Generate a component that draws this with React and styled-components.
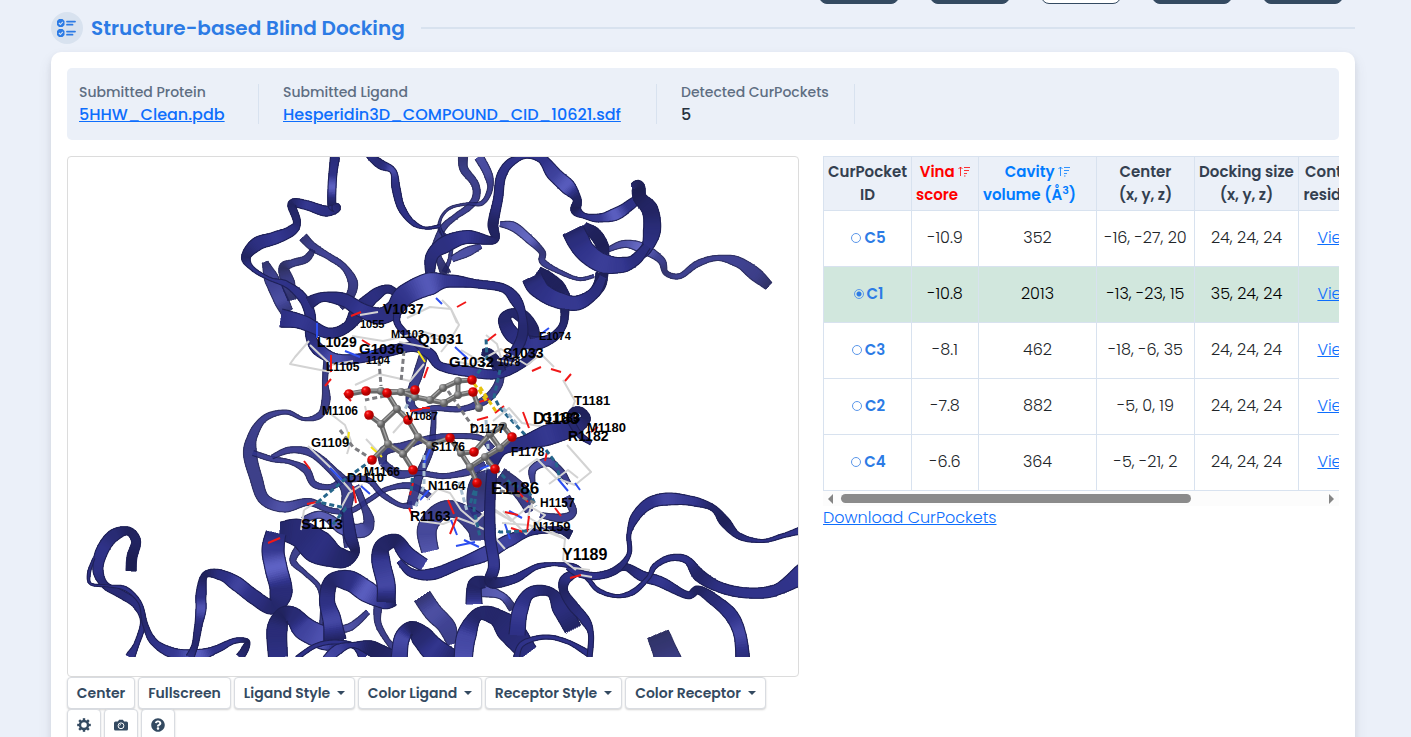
import React, { useState } from "react";
import styled, { createGlobalStyle, css } from "styled-components";
import { FaQuestionCircle } from "react-icons/fa";

const Global = createGlobalStyle`
  *, *::before, *::after { box-sizing: border-box; }
  body { margin: 0; background: #ebf0f9; color: #212529; font: 300 16px/24px Poppins, Inter, sans-serif; }
  button, input { font: inherit; }
`;

const Page = styled.main`
  height: 100vh;
  overflow: hidden;
  padding: 0 56px 0 51px;
`;

const TopNav = styled.nav`
  display: flex;
  justify-content: flex-end;
  align-items: flex-end;
  gap: 31px;
  height: 4px;
  padding-right: 12px;
`;

const NavButton = styled.button`
  flex: none;
  width: 80px;
  height: 32px;
  border: 1px solid #344a61;
  border-radius: 8px;
  background: ${(p) => (p.$active ? "#fff" : "#344a61")};
`;

const Heading = styled.header`
  display: flex;
  align-items: center;
  height: 48px;
  &::after {
    content: "";
    flex: 1;
    height: 2px;
    margin-left: 16px;
    background: #d8e2ef;
  }
`;

const HeadingIcon = styled.span`
  display: grid;
  place-items: center;
  width: 32px;
  height: 32px;
  margin-right: 8px;
  border-radius: 50%;
  background: #d8e2ef;
`;

const Title = styled.h1`
  margin: 0;
  color: #2c7be5;
  font-size: 20px;
  font-weight: 600;
  line-height: 32px;
`;

const Card = styled.section`
  min-height: 100vh;
  padding: 16px;
  border-radius: 10px;
  background: #fff;
  box-shadow: 0 7px 14px rgba(65, 69, 88, 0.1), 0 3px 6px rgba(0, 0, 0, 0.07);
`;

const Summary = styled.div`
  display: flex;
  padding: 16px 12px;
  border-radius: 5px;
  background: #ebf0f8;
`;

const SummaryItem = styled.div`
  flex: 0 0 ${(p) => p.$basis}px;
  height: 40px;
  border-right: 1px solid #d8e2ef;
  & + & { padding-left: 24px; }
`;

const SummaryLabel = styled.div`
  color: #5e6e82;
  font-size: 14px;
  font-weight: 500;
  line-height: 17px;
`;

const SummaryValue = styled.div`
  color: #263240;
  font-weight: 500;
  line-height: 27px;
`;

const Link = styled.a`
  color: #0d6efd;
  text-decoration: underline;
`;

const Columns = styled.div`
  display: grid;
  grid-template-columns: minmax(0, 732fr) minmax(0, 516fr);
  gap: 24px;
  margin-top: 16px;
`;

const Viewer = styled.div`
  height: 521px;
  border: 1px solid #dcdcdc;
  border-radius: 4px;
  overflow: hidden;
`;

const Scene = styled.svg`
  display: block;
  width: 100%;
  height: 500px;
`;

const Toolbar = styled.div`
  display: flex;
  flex-wrap: wrap;
  column-gap: 3px;
`;

const ToolButton = styled.button`
  display: inline-flex;
  align-items: center;
  justify-content: center;
  gap: 7px;
  width: ${(p) => p.$width}px;
  height: 32px;
  padding: 0;
  border: 1px solid #d9dce1;
  border-radius: 4px;
  background: #fff;
  box-shadow: 0 1px 2px rgba(0, 0, 0, 0.18);
  color: #344a61;
  font-size: 14px;
  font-weight: 600;
  white-space: nowrap;
  ${(p) => p.$menu && css`
    &::after {
      content: "";
      border: 4px solid transparent;
      border-top-color: currentColor;
      border-bottom: 0;
    }
  `}
`;

const TableClip = styled.div`overflow: hidden;`;

const Table = styled.table`
  width: 550px;
  table-layout: fixed;
  border-collapse: collapse;
  text-align: center;
`;

const Th = styled.th`
  height: 54px;
  padding: 3px 0 4px;
  border: 1px solid #d8e2ef;
  background: #ebf0f8;
  color: #344050;
  font-size: 15px;
  font-weight: 600;
  line-height: 23px;
  white-space: nowrap;
`;

const SortButton = styled.button`
  display: inline-block;
  padding: 0;
  border: 0;
  background: none;
  color: ${(p) => p.$color};
  font-weight: 600;
  vertical-align: top;
`;

const SortLine = styled.span`
  display: block;
  padding-right: ${(p) => (p.$last ? 16 : 0)}px;
  sup { font-size: 11px; line-height: 0; }
`;

const Row = styled.tr`
  background: ${(p) => (p.$selected ? "#d1e7dd" : "#fff")};
  color: ${(p) => (p.$selected ? "#000" : "#212529")};
`;

const Td = styled.td`
  height: 56px;
  padding: 0 0 2px;
  border: 1px solid #d8e2ef;
  white-space: nowrap;
`;

const PocketLabel = styled.label`
  display: inline-flex;
  align-items: center;
  gap: 3px;
  padding-left: 2px;
  color: #2c7be5;
  font-size: 15px;
  font-weight: 600;
`;

const PocketRadio = styled.input`
  appearance: none;
  width: 10px;
  height: 10px;
  margin: 0;
  border: 1px solid #5b97ea;
  border-radius: 50%;
  &:checked { background: radial-gradient(circle, #2c7be5 0 2px, transparent 3px); }
`;

const Scrollbar = styled.div`
  display: flex;
  align-items: center;
  gap: 8px;
  height: 15px;
  padding: 0 5px;
  background: #fcfcfc;
`;

const ScrollArrow = styled.span`
  border: 5px solid transparent;
  ${(p) => (p.$right ? "border-left-color: #858585; border-right: 0;" : "border-right-color: #858585; border-left: 0;")}
`;

const ScrollTrack = styled.div`flex: 1;`;
const ScrollThumb = styled.div`
  width: 73%;
  height: 9px;
  border-radius: 5px;
  background: #8b8b8b;
`;

/* ---------- ribbon drawing ---------- */

const spline = (a, b, c, d, t) =>
  0.5 * (2 * b + (c - a) * t + (2 * a - 5 * b + 4 * c - d) * t * t + (3 * b - a - 3 * c + d) * t * t * t);

const STEPS = 12;

function tint(s) {
  const dark = [27, 29, 78], mid = [48, 51, 138], light = [112, 116, 218];
  const k = Math.max(0, Math.min(1, s));
  const [from, to, u] = k < 0.5 ? [dark, mid, k * 2] : [mid, light, (k - 0.5) * 2];
  return `rgb(${from.map((v, i) => Math.round(v + (to[i] - v) * u)).join(",")})`;
}

/* A ribbon is a list of [x, y, width, shade] stations along its centre line. */
function Ribbon({ pts, faded }) {
  const samples = [];
  for (let i = 0; i < pts.length - 1; i++) {
    const q = [pts[Math.max(0, i - 1)], pts[i], pts[i + 1], pts[Math.min(pts.length - 1, i + 2)]];
    for (let j = 0; j < STEPS; j++) {
      const t = j / STEPS;
      const ease = t * t * (3 - 2 * t);
      const v = [0, 1].map((n) => spline(q[0][n], q[1][n], q[2][n], q[3][n], t));
      const sa = q[1][3] ?? 0.46, sb = q[2][3] ?? 0.46;
      samples.push([v[0], v[1], q[1][2] + (q[2][2] - q[1][2]) * ease, sa + (sb - sa) * ease]);
    }
  }
  const last = pts[pts.length - 1];
  samples.push([last[0], last[1], last[2], last[3] ?? 0.46]);
  const edges = samples.map((s, i) => {
    const a = samples[Math.max(0, i - 4)], b = samples[Math.min(samples.length - 1, i + 4)];
    const dx = b[0] - a[0], dy = b[1] - a[1], len = Math.hypot(dx, dy) || 1;
    const nx = (-dy / len) * (s[2] / 2), ny = (dx / len) * (s[2] / 2);
    return { l: [s[0] + nx, s[1] + ny], r: [s[0] - nx, s[1] - ny], turn: Math.abs(dx / len), s: s[3] };
  });
  const f = (p) => `${p[0].toFixed(1)} ${p[1].toFixed(1)}`;
  const line = (side) => "M" + edges.map((e) => f(e[side])).join("L");
  return (
    <g opacity={faded ? 0.92 : 1}>
      <g shapeRendering="crispEdges">
        {edges.slice(1).map((e, i) => {
          const p = edges[i];
          const c = tint(e.s + (e.turn - 0.6) * 0.1);
          return <path key={i} d={`M${f(p.l)}L${f(e.l)}L${f(e.r)}L${f(p.r)}Z`} fill={c} stroke={c} strokeWidth="0.6" />;
        })}
      </g>
      <path d={line("l")} fill="none" stroke="#1e2056" strokeWidth="1.1" strokeLinejoin="round" />
      <path d={line("r")} fill="none" stroke="#1e2056" strokeWidth="1.1" strokeLinejoin="round" />
    </g>
  );
}

const backRibbons = [
  [[265,262,6,.2],[272,280,14,.5],[281,300,14,.6],[287,312,12,.3]],
  [[303,237,9,.2],[313,247,8,.4],[328,256,6,.5],[344,267,6],[353,283,9],[349,298,8,.3],[340,307,7,.2]],
  [[313,250,5,.2],[306,259,7,.3],[293,263,7,.4],[284,268,10,.1],[288,283,13,.4],[292,300,8,.2]],
  [[463,157,9,.3],[464,169,8,.4],[475,184,7],[476,197,7],[469,207,6],[455,217,5],[443,228,6],[435,246,6]],
  [[479,157,9,.6],[488,174,8,.6],[490,189,5],[482,203,4],[466,204,2],[450,208,2],[441,218,2],[440,230,3],[450,242,4],[450,258,3],[444,272,4]],
  [[452,259,6,.6],[467,252,9,.6],[481,246,5,.5]],
  [[440,228,2],[445,243,3],[438,254,5],[446,274,10,.1]],
  [[500,224,5,.5],[514,227,9,.7],[529,239,8,.8],[542,252,6,.3],[543,262,6],[560,272,4],[579,279,3],[594,276,3]],
  [[605,251,4],[624,244,7,.6],[642,248,10,.8],[661,260,7],[666,273,5,.2],[680,276,5],[697,264,6],[717,258,5],[738,262,10],[755,274,13,.4],[769,286,9,.1]],
  [[327,360,6],[325,380,5],[326,400,8],[320,415,6],[304,419,3],[286,412,4],[265,418,6],[253,435,9],[250,454,13],[256,478,12],[264,499,11],[284,507,10,.6],[309,502,7],[329,510,5],[350,511,5],[369,500,4],[387,489,4],[411,486,6],[431,497,5]],
  [[253,453,5],[272,459,5],[290,462,4],[306,470,7],[314,484,6],[330,487,5],[346,480,6],[368,480,5],[382,494,5],[400,505,4],[412,505,7]],
  [[272,457,4],[290,450,6],[311,453,7],[331,469,8],[347,489,12],[346,515,10],[350,547,11]],
  [[303,520,6],[322,515,7,.7],[344,529,12,.7],[363,530,14,.6],[369,521,10],[363,503,6],[356,486,6]],
  [[299,548,8],[293,561,6],[305,573,4],[319,587,4],[322,606,3],[321,626,3]],
  [[330,630,8],[350,627,7,.6],[368,612,5]],
  [[378,606,8],[378,623,6],[387,640,5],[397,651,7]],
  [[425,350,8],[418,374,9],[410,399,8],[418,411,5],[435,408,5],[462,409,5],[485,400,8],[498,385,8],[502,365,6]],
  [[434,411,4],[433,431,5],[430,450,7],[418,479,8],[412,505,10]],
  [[383,464,7],[384,451,9,.3],[403,446,7],[430,438,5],[455,436,5],[480,438,5],[492,449,7]],
  [[383,463,7],[398,474,8],[420,473,5],[445,476,5],[474,470,7],[485,463,4]],
  [[492,473,10],[480,484,20,.2],[477,500,20,.4],[481,512,18]],
  [[500,475,15,.2],[521,492,15,.4],[529,512,7]],
  [[566,497,8],[573,512,7],[562,518,8],[540,515,5]],
  [[533,483,4],[533,469,7,.6],[548,462,8,.6],[560,471,7],[569,483,4]],
  [[430,551,17,.7],[427,529,19,.6],[439,512,17,.4],[456,510,16,.4],[477,525,22,.4],[480,540,19]],
  [[422,596,18,.2],[433,612,18,.6],[447,627,17,.5],[452,644,10]],
  [[480,589,15,.6],[502,596,7,.7],[513,609,8,.2]],
  [[658,634,22,.1],[662,644,23,.2],[669,662,26,.4]],
];

const frontRibbons = [
  [[335,157,9,.4],[333,173,8,.5],[332,188,8,.9],[332,205,8,.2],[336,208,9,.3],[325,211,10,.4],[306,205,9,.5],[292,204,8,.2],[297,222,7,.3],[291,231,10,.4],[275,238,12,.5],[257,244,13,.4],[246,257,9,.2],[253,269,4],[270,279,3],[286,284,6],[302,297,9],[310,314,10],[311,337,10,.4],[319,350,12,.5],[337,359,10,.7],[362,358,9],[389,351,10],[414,347,9],[430,354,10],[440,366,8],[465,371,10,.6],[498,374,9],[526,361,8,.3],[534,349,7]],
  [[366,153,5],[380,164,9,.3],[393,171,6,.7],[396,188,8],[401,207,7],[412,222,5],[425,228,2],[440,226,3]],
  [[430,278,8,.3],[432,256,12,.4],[446,244,16,.4],[467,237,13,.5],[494,240,7,.2],[493,224,10,.2],[498,199,9],[501,177,9],[510,163,8],[525,157,3],[541,158,9],[554,174,14,.6],[567,186,15,.8],[577,199,8,.2],[576,210,10,.1],[585,216,5],[599,218,8,.5],[616,214,12,.8],[630,205,10],[642,195,6]],
  [[632,187,7,.2],[638,187,13,.1],[640,198,13,.1],[650,210,16,.2],[652,230,17,.4],[646,249,11],[632,260,7,.3]],
  [[584,226,8,.2],[595,234,12,.1],[602,245,12,.1],[605,258,8,.2]],
  [[573,230,22,.2],[578,240,22,.4],[586,252,20,.5],[602,263,19,.55],[621,265,15,.5],[635,260,11,.4],[647,246,8,.4]],
  [[602,273,12,.1],[600,284,12,.2],[594,294,10,.3]],
  [[538,271,9,.1],[548,278,12,.1],[558,286,12,.1],[566,297,9,.2]],
  [[532,277,20,.2],[536,285,20,.4],[544,293,17,.45],[558,300,16,.5],[577,303,14,.5],[594,293,11,.4],[603,277,8,.4]],
  [[565,309,8,.2],[563,325,7,.3],[552,338,9,.4],[534,343,13,.5],[514,336,15,.4],[505,321,13,.3],[511,313,8,.2],[523,317,13,.2],[532,328,12,.2],[535,338,9,.3]],
  [[281,318,18,.4],[302,322,14,.5],[328,333,10,.4],[347,327,10,.3],[359,311,16,.3],[374,296,12,.4],[387,289,8,.3],[398,294,6,.2]],
  [[309,303,12,.2],[323,297,9,.4],[344,300,13,.4],[361,310,14,.5],[380,316,16,.4],[394,309,17,.4],[405,295,20,.5],[429,284,22,.75],[450,281,12,.5],[478,284,8,.4],[503,288,8,.4],[515,299,11,.4],[522,315,8,.4],[522,337,10,.3],[510,358,10,.5],[492,368,6,.3]],
  [[399,306,8],[397,322,6],[408,336,6],[421,347,7]],
  [[482,352,6,.1],[489,354,10,.1],[496,362,10,.1],[503,372,7,.3]],
  [[131,571,10,.1],[132,557,10,.1],[136,541,9,.2],[128,531,8,.1],[113,536,12,.3],[102,551,12,.5],[98,570,10,.5],[105,585,7,.3],[121,594,8,.3],[137,605,8,.4],[143,622,5],[137,643,5],[130,657,9]],
  [[94,558,2],[89,573,3],[91,584,2],[109,586,2],[126,589,4],[140,603,3],[145,624,5,.3],[154,642,7],[173,653,10,.5],[198,655,11,.8],[217,649,7],[234,641,5],[247,641,4,.1],[245,649,7,.2],[240,657,8,.3]],
  [[347,509,9],[350,535,12,.4],[355,553,8,.1],[340,558,20,.2],[318,547,33,.4],[299,533,27,.3],[280,531,18,.2]],
  [[276,533,20,.4],[273,550,22,.6],[276,568,22,.9],[281,592,22,.4],[272,607,14,.2],[254,597,14,.4],[237,584,14,.6],[221,575,10,.4],[205,575,6,.1],[201,595,10,.5],[201,609,10,.8],[198,628,7,.4],[195,645,6,.3],[190,657,8]],
  [[278,657,19,.5],[277,630,20,.4],[283,615,15,.1],[294,617,18,.3],[305,629,23,.6],[324,638,23,.7],[343,643,15,.2]],
  [[335,640,22,.2],[332,620,18,.7],[327,600,15,.5],[332,581,14,.2],[350,581,20,.4],[366,591,21,.8],[384,601,15,.5],[395,600,11,.1]],
  [[386,602,18,.2],[386,584,18,.7],[381,562,18,.6],[382,547,15,.2],[396,541,13,.1],[407,554,15,.5],[424,565,13,.6]],
  [[297,658,4],[315,646,4],[335,642,4],[354,646,5],[365,657,12]],
  [[327,660,10,.7],[337,650,10,.6],[352,645,5],[373,649,15,.1],[389,661,23,.2]],
  [[399,660,16,.6],[402,638,15,.7],[412,628,13,.1],[423,638,22,.3],[434,650,24,.5],[454,662,22,.2]],
  [[474,604,16,.7],[475,585,14,.2],[485,582,11,.1]],
  [[463,662,18,.8],[466,637,19,.7],[477,615,12,.2],[494,616,16,.2],[510,630,26,.3],[528,653,20,.4]],
  [[517,635,16,.5],[520,611,15,.6],[530,593,11,.4],[550,592,9,.2],[562,609,18,.4],[573,629,17,.2]],
  [[516,660,6],[522,644,5],[545,637,4],[568,642,4],[589,654,6]],
  [[399,561,5],[412,573,8],[433,574,11],[459,564,10],[485,554,14,.6],[508,541,12,.6],[532,532,6,.4],[558,530,6,.2],[571,535,9,.1]],
  [[615,571,4],[626,567,7,.2],[642,576,10,.4],[661,582,10,.5],[687,595,7,.3],[698,590,8,.1],[713,599,11,.3],[731,615,13,.5],[740,635,12,.7],[743,662,14,.4]],
  [[577,572,7],[565,580,10,.4],[564,592,8,.2],[573,606,10,.3],[585,620,9,.4],[591,635,5],[589,662,5]],
  [[554,564,3],[575,567,5],[588,579,4],[598,590,4],[616,596,3],[633,592,5],[648,578,4],[655,566,5],[670,558,6],[687,560,7],[700,576,12,.2],[722,588,10,.4],[749,593,10],[776,590,11],[804,573,20,.5]],
  [[567,568,3],[578,573,7],[596,576,7],[616,570,7,.3],[629,554,4],[629,534,4],[636,516,9],[650,503,11],[668,499,12,.6],[692,501,9,.5],[713,508,6,.2],[725,522,10,.1],[739,536,6,.3],[762,541,3],[782,536,4],[802,530,7]],
  [[492,470,10,.4],[490,500,10,.4],[490,536,11,.5],[494,565,11,.6],[491,582,11,.1],[514,579,8,.4],[536,567,5],[554,564,3]],
  [[491,466,11,.3],[502,450,10,.4],[523,443,13,.4],[548,435,20,.5],[571,428,18,.4],[585,420,10,.2],[582,411,6,.1],[573,411,6,.1],[571,420,7,.3],[579,434,6,.3],[591,443,4]],
];

const sticks = [
  "M407 318L430 307L451 309L459 325L449 342L429 337M451 309L442 300M451 309L457 323",
  "M360 315L378 312M352 336L383 341L424 332L449 339M399 342L430 348",
  "M309 341L295 357L290 364L305 367L331 372M310 345L331 365L353 361",
  "M355 385L379 374L410 381L424 364M327 411L345 425L351 441L347 454M365 406L368 420",
  "M308 446L330 467L345 484L352 492M366 439L381 455M393 433L408 416",
  "M304 510L301 530M304 510L316 502M340 510L349 493L362 485L353 490",
  "M427 500L438 489L450 493L461 510L474 521L490 511M420 521L443 524L458 518L474 524L489 508L506 518",
  "M455 361L472 365L501 349L527 365L541 354L554 367M563 380L575 401L570 414",
  "M493 421L509 408L522 423L545 427L568 422M519 472L537 459L556 478L575 485L591 472L567 445",
  "M490 506L511 521L529 506L545 515L526 534L503 511M532 503L528 517L552 532L565 539L563 560L576 570",
  "M549 484L568 470L578 478M574 568L590 570M580 575L592 577",
  "M475 525L490 532L505 549M502 523L529 525L563 538",
  "M486 335L497 344L501 358M449 342L441 352M461 350L478 360M497 360L517 364",
];
const blueTips = "M436 298L442 304M345 351L360 357M317 323L317 338M455 347L468 359M330 468L342 480M361 486L370 494M420 500L429 490M456 546L475 542M451 520L457 535M480 469L500 461M509 511L522 518M558 479L568 491M575 483L580 490M505 524L510 539M536 566L549 564M541 334L549 328M424 464L431 447M572 422L581 436M363 352L375 352M464 540L479 547";
const redTips = "M457 307L466 302M351 316L361 312M362 340L370 345M344 393L351 401M325 386L331 379M331 355L331 372M424 378L428 367M422 408L430 408M304 461L310 469M268 543L280 538M307 504L317 502M353 486L356 503M410 495L413 483M448 500L454 514M450 534L457 517M487 341L496 334M532 371L541 367M551 369L561 372M565 381L571 374M479 402L489 399M495 413L504 406M529 428L523 412M545 461L547 452M561 516L555 508M511 528L523 532M529 516L527 532M570 578L581 575M517 491L528 502M505 512L518 515M409 508L413 517M477 420L488 417M410 411L422 409M591 432L598 427";

const contacts = [
  ["#26668b", "M372 460L344 480L318 502L346 508M346 508L330 528M477 483L474 510L480 537M477 483L469 507M413 470L411 494M496 469L510 483L529 492L536 506M473 380L487 360L486 338M500 370L494 397L500 408L514 423L530 440M546 450L556 463L560 479M484 524L500 532L530 531"],
  ["#a8bed1", "M415 390L403 413M424 455L424 486L415 508M486 420L488 448L487 474M459 482L467 511M503 408L517 424"],
  ["#7c7c80", "M379 361L381 386M404 351L401 382M385 396L365 400M448 391L466 417L478 433M340 430L353 447L370 458M492 489L515 494L537 504"],
  ["#e5c30e", "M469 377L479 390L487 402M480 387L497 413"],
];

const carbon = { C1:[381,391], C2:[401,392], C3:[415,397], C4:[397,409], C5:[381,424], C6:[388,444], C7:[403,454], C8:[418,437], C9:[430,445], C10:[443,388], C11:[458,395], C12:[458,381], C13:[430,400], C14:[444,403], C15:[479,408], C16:[461,453], C17:[470,467], C18:[485,457], C19:[500,448], C20:[490,434], C21:[503,426] };
const oxygen = { O1:[349,394], O2:[366,391], O3:[387,393], O4:[415,390], O5:[369,415], O6:[408,420], O7:[372,460], O8:[413,470], O9:[450,438], O10:[474,452], O11:[512,437], O12:[477,483], O13:[472,380], O14:[473,392], O15:[495,469] };
const atoms = { ...carbon, ...oxygen };
const bonds = "O1-O2 O2-C1 C1-C2 C2-O3 C2-C3 C2-O4 C3-C13 C13-C14 C14-C11 C11-C12 C12-C10 C10-C13 C12-O13 C11-O14 O14-C15 O3-C4 C4-C5 C4-O6 C5-O5 C5-C6 C6-O7 C6-C7 C7-C8 C7-O8 O6-C8 C8-C9 C9-O9 O9-C16 C16-O10 C16-C17 C17-O12 C17-C18 C18-C19 C18-O15 C19-O11 C19-C20 C20-C21 O10-C20 C21-O11".split(" ").map((b) => b.split("-"));

const labels = [
  ["1055",360,328,11],["M1103",391,338,11],["1104",366,364,11],["L1105",326,371,12],["1078",498,366,10],["E1074",539,340,11],
  ["V1087",406,420,11],["D1177",470,433,12],["S1176",431,451,12],["F1178",511,456,12],["H1157",540,507,12],["M1106",322,415,12],
  ["V1037",383,314,14],["Q1031",418,344,15],["L1029",317,347,14],["G1036",359,354,15],["G1032",449,367,15],["S1033",503,358,14],
  ["T1181",574,405,13],["M1180",587,432,13],["G1183",542,422,13],["D1183",533,424,16],["R1182",568,441,14],["G1109",311,447,13],["M1166",364,476,12],
  ["D1110",347,482,13],["N1164",428,490,13],["R1163",410,521,14],["N1159",533,531,13],["S1113",301,529,15],["E1186",491,494,17],["Y1189",562,560,16],
];

function Molecule() {
  return (
    <Scene viewBox="68 157 730 500" role="img" aria-label="Docked ligand in protein pocket">
      <defs>
        <radialGradient id="oxygen" cx="35%" cy="30%"><stop offset="0" stopColor="#ff6a6a" /><stop offset=".35" stopColor="#f00c0c" /><stop offset="1" stopColor="#b00000" /></radialGradient>
        <radialGradient id="carbon" cx="35%" cy="30%"><stop offset="0" stopColor="#b5b5b5" /><stop offset="1" stopColor="#5e5e5e" /></radialGradient>
      </defs>
      {backRibbons.map((pts, i) => <Ribbon key={i} pts={pts} faded />)}
      {frontRibbons.slice(0, -2).map((pts, i) => <Ribbon key={i} pts={pts} />)}
      <g fill="none" strokeWidth="2">
        {sticks.map((d) => <path key={d} d={d} stroke="#d3d3d3" strokeLinejoin="round" />)}
        <path d={blueTips} stroke="#2e4ff0" />
        <path d={redTips} stroke="#f01818" />
        <path d="M418 351L425 362M349 432L347 444M371 447L382 457" stroke="#f5e416" />
      </g>
      {contacts.map(([c, d]) => <path key={c} d={d} fill="none" stroke={c} strokeWidth="3" strokeDasharray="5 3" />)}
      {frontRibbons.slice(-2).map((pts, i) => <Ribbon key={i} pts={pts} />)}
      <g stroke="#686868" strokeWidth="5" strokeLinecap="round">
        {bonds.map(([a, b]) => <line key={a + b} x1={atoms[a][0]} y1={atoms[a][1]} x2={atoms[b][0]} y2={atoms[b][1]} />)}
      </g>
      <g stroke="#a2a2a2" strokeWidth="1.4">
        {bonds.map(([a, b]) => <line key={a + b} x1={atoms[a][0]} y1={atoms[a][1] - 1} x2={atoms[b][0]} y2={atoms[b][1] - 1} />)}
      </g>
      {Object.entries(carbon).map(([k, [x, y]]) => <circle key={k} cx={x} cy={y} r="4" fill="url(#carbon)" />)}
      {Object.entries(oxygen).map(([k, [x, y]]) => <circle key={k} cx={x} cy={y} r="4.8" fill="url(#oxygen)" />)}
      <g fill="#000" fontFamily="Liberation Sans, sans-serif" fontWeight="700">
        {labels.map(([t, x, y, s]) => <text key={t} x={x} y={y} fontSize={s}>{t}</text>)}
      </g>
    </Scene>
  );
}

const SortIcon = () => (
  <svg width="12" height="11" viewBox="0 0 12 11" fill="none" stroke="currentColor" strokeWidth="0.8" aria-hidden="true">
    <path d="M2.5 10V1M.5 3l2-2 2 2M6 1.5h6M6 4.5h5M6 7.5h3M6 10h1.5" />
  </svg>
);

const GearIcon = () => (
  <svg width="14" height="14" viewBox="0 0 14 14" fill="none" stroke="currentColor" aria-hidden="true">
    <circle cx="7" cy="7" r="4" strokeWidth="2.4" />
    {[0, 45, 90, 135, 180, 225, 270, 315].map((a) => (
      <path key={a} d="M7 .2v2.4" strokeWidth="2.4" transform={`rotate(${a} 7 7)`} />
    ))}
  </svg>
);

const CameraIcon = () => (
  <svg width="14" height="12" viewBox="0 0 14 12" aria-hidden="true">
    <path d="M1.5 2.5h2.3L5.2.8h3.6l1.4 1.7h2.3Q14 2.5 14 4v6q0 1.5-1.5 1.5h-11Q0 11.5 0 10V4q0-1.5 1.5-1.5Z" fill="currentColor" />
    <circle cx="7" cy="6.8" r="2.9" fill="none" stroke="#fff" strokeWidth="1" />
    <path d="M5.600 6.8q0-1.400 1.400-1.400" fill="none" stroke="#fff" strokeWidth=".7" />
  </svg>
);

const ChecklistIcon = () => (
  <svg width="20" height="20" viewBox="0 0 20 20" aria-hidden="true">
    {[1, 11].map((y) => (
      <g key={y} transform={`translate(0 ${y})`}>
        <path d="M2 0h3.5L7.5 2v4L5.5 8H2L0 6V2Z" fill="#2c7be5" />
        <path d="M1.9 4l1.5 1.5L5.8 2.8" fill="none" stroke="#d8e2ef" strokeWidth="1.1" />
        <path d="M10 2.6h8M10 5.7h5.5" stroke="#2c7be5" strokeWidth="1.8" strokeLinecap="round" />
      </g>
    ))}
  </svg>
);

const rows = [
  ["C5", "-10.9", "352", "-16, -27, 20", "24, 24, 24"],
  ["C1", "-10.8", "2013", "-13, -23, 15", "35, 24, 24"],
  ["C3", "-8.1", "462", "-18, -6, 35", "24, 24, 24"],
  ["C2", "-7.8", "882", "-5, 0, 19", "24, 24, 24"],
  ["C4", "-6.6", "364", "-5, -21, 2", "24, 24, 24"],
];

export default function App() {
  const [selected, setSelected] = useState("C1");
  return (
    <>
      <Global />
      <Page>
        <TopNav aria-label="Sections">
          {[0, 1, 2, 3, 4].map((i) => <NavButton key={i} type="button" $active={i === 2} />)}
        </TopNav>
        <Heading>
          <HeadingIcon><ChecklistIcon /></HeadingIcon>
          <Title>Structure-based Blind Docking</Title>
        </Heading>
        <Card>
          <Summary>
            <SummaryItem $basis={180}>
              <SummaryLabel>Submitted Protein</SummaryLabel>
              <SummaryValue><Link href="#protein">5HHW_Clean.pdb</Link></SummaryValue>
            </SummaryItem>
            <SummaryItem $basis={398}>
              <SummaryLabel>Submitted Ligand</SummaryLabel>
              <SummaryValue><Link href="#ligand">Hesperidin3D_COMPOUND_CID_10621.sdf</Link></SummaryValue>
            </SummaryItem>
            <SummaryItem $basis={198}>
              <SummaryLabel>Detected CurPockets</SummaryLabel>
              <SummaryValue>5</SummaryValue>
            </SummaryItem>
          </Summary>
          <Columns>
            <div>
              <Viewer><Molecule /></Viewer>
              <Toolbar>
                <ToolButton type="button" $width={68}>Center</ToolButton>
                <ToolButton type="button" $width={93}>Fullscreen</ToolButton>
                <ToolButton type="button" $width={121} $menu>Ligand Style</ToolButton>
                <ToolButton type="button" $width={124} $menu>Color Ligand</ToolButton>
                <ToolButton type="button" $width={137} $menu>Receptor Style</ToolButton>
                <ToolButton type="button" $width={141} $menu>Color Receptor</ToolButton>
                <ToolButton type="button" $width={34} aria-label="Settings"><GearIcon /></ToolButton>
                <ToolButton type="button" $width={34} aria-label="Snapshot"><CameraIcon /></ToolButton>
                <ToolButton type="button" $width={34} aria-label="Help"><FaQuestionCircle /></ToolButton>
              </Toolbar>
            </div>
            <div>
              <TableClip>
                <Table>
                  <colgroup>
                    {[88, 67, 118, 98, 104, 75].map((w, i) => <col key={i} width={w} />)}
                  </colgroup>
                  <thead>
                    <tr>
                      <Th>CurPocket<br />ID</Th>
                      <Th>
                        <SortButton type="button" $color="#ff0000">
                          <SortLine>Vina <SortIcon /></SortLine>
                          <SortLine $last>score</SortLine>
                        </SortButton>
                      </Th>
                      <Th>
                        <SortButton type="button" $color="#007bff">
                          <SortLine>Cavity <SortIcon /></SortLine>
                          <SortLine $last>volume (Å<sup>3</sup>)</SortLine>
                        </SortButton>
                      </Th>
                      <Th>Center<br />(x, y, z)</Th>
                      <Th>Docking size<br />(x, y, z)</Th>
                      <Th>Contact<br />residues</Th>
                    </tr>
                  </thead>
                  <tbody>
                    {rows.map(([id, ...cells]) => (
                      <Row key={id} $selected={id === selected}>
                        <Td>
                          <PocketLabel>
                            <PocketRadio type="radio" name="pocket" checked={id === selected} onChange={() => setSelected(id)} />
                            {id}
                          </PocketLabel>
                        </Td>
                        {cells.map((c, i) => <Td key={i}>{c}</Td>)}
                        <Td><Link href={"#" + id}>View</Link></Td>
                      </Row>
                    ))}
                  </tbody>
                </Table>
              </TableClip>
              <Scrollbar aria-hidden="true">
                <ScrollArrow />
                <ScrollTrack><ScrollThumb /></ScrollTrack>
                <ScrollArrow $right />
              </Scrollbar>
              <Link href="#download">Download CurPockets</Link>
            </div>
          </Columns>
        </Card>
      </Page>
    </>
  );
}
